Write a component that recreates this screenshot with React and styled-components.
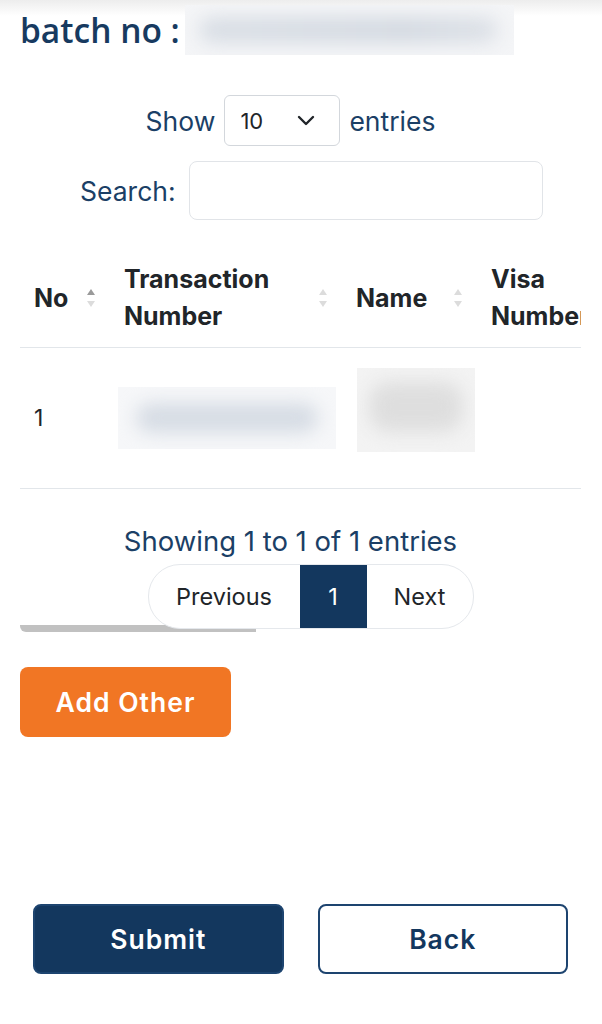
import React from 'react';
import styled, {createGlobalStyle} from 'styled-components';

const GlobalStyle = createGlobalStyle`
  body {
    margin: 0;
    background: #ffffff;
    font-family: Inter, "Liberation Sans", sans-serif;
  }
  * {
    box-sizing: border-box;
  }
`;

const Page = styled.div`
  width: 602px;
  height: 1024px;
  padding: 5px 21px 0 20px;
  background: linear-gradient(#ededed 0px, #ffffff 16px);
  display: flex;
  flex-direction: column;
`;

const BatchRow = styled.div`
  display: flex;
  align-items: center;
  height: 50px;
`;

const BatchLabel = styled.div`
  font-family: "Open Sans", "Liberation Sans", sans-serif;
  font-size: 33.5px;
  font-weight: 600;
  color: #173a60;
  margin-right: 5px;
`;

const Blurred = styled.div`
  width: ${p => p.w}px;
  height: ${p => p.h}px;
  background: ${p => p.bg};
  position: relative;
  overflow: hidden;

  &::after {
    content: '';
    position: absolute;
    inset: ${p => p.inset || '14px 18px'};
    background: ${p => p.blob};
    border-radius: 20px;
    filter: blur(9px);
  }
`;

const LengthRow = styled.div`
  margin-top: 40px;
  display: flex;
  justify-content: center;
  align-items: center;
  gap: 9px;
  padding-right: 20px;
`;

const Label = styled.span`
  font-size: 26.5px;
  color: #1b3f66;
`;

const SelectBox = styled.div`
  width: 116px;
  height: 51px;
  border: 1.5px solid #d3d7dc;
  border-radius: 6px;
  display: flex;
  align-items: center;
  justify-content: space-between;
  padding: 0 24px 0 15px;
  font-size: 22px;
  color: #212529;
`;

const SearchRow = styled.div`
  margin-top: 15px;
  display: flex;
  align-items: center;
  gap: 13px;
  padding-left: 60px;
`;

const SearchInput = styled.div`
  width: 354px;
  height: 59px;
  border: 1.5px solid #e1e4e8;
  border-radius: 8px;
`;

const TableWrap = styled.div`
  margin-top: 29px;
  width: 561px;
  overflow: hidden;
`;

const Table = styled.table`
  border-collapse: collapse;
  table-layout: fixed;
  width: 720px;
`;

const Th = styled.th`
  width: ${p => p.w}px;
  height: 97px;
  padding: 12px 14px;
  text-align: left;
  font-size: 25px;
  font-weight: 700;
  line-height: 37px;
  color: #212529;
  border-bottom: 1.5px solid #e2e6ea;
`;

const ThInner = styled.div`
  display: flex;
  align-items: center;
  justify-content: space-between;
  white-space: nowrap;
`;

const Td = styled.td`
  height: 141px;
  padding: 0 14px;
  font-size: 23px;
  color: #212529;
  vertical-align: middle;
  border-bottom: 1.5px solid #e2e6ea;
`;

const Info = styled.div`
  margin-top: 35px;
  text-align: center;
  font-size: 27.5px;
  color: #1b3f66;
  padding-right: 20px;
`;

const Pager = styled.div`
  margin: 6px auto 0;
  position: relative;
  left: 10px;
  display: flex;
  height: 65px;
  border: 1.5px solid #e5e8ec;
  border-radius: 32px;
  overflow: hidden;
  background: #fff;
  z-index: 1;
`;

const PageButton = styled.div`
  width: ${p => p.w}px;
  display: flex;
  align-items: center;
  justify-content: center;
  font-size: 23.5px;
  color: ${p => (p.active ? '#ffffff' : '#212529')};
  background: ${p => (p.active ? '#13375e' : 'transparent')};
`;

const ScrollThumb = styled.div`
  margin-top: -4px;
  width: 236px;
  height: 7px;
  background: #c1c1c1;
  border-radius: 0 0 0 6px;
`;

const AddButton = styled.button`
  margin-top: 35px;
  width: 211px;
  height: 70px;
  border: none;
  border-radius: 8px;
  background: #f17624;
  color: #fff;
  font-family: Inter, "Liberation Sans", sans-serif;
  font-size: 26.5px;
  font-weight: 600;
  letter-spacing: 1px;
`;

const ActionRow = styled.div`
  margin-top: 167px;
  padding: 0 13px;
  display: flex;
  gap: 34px;
`;

const ActionButton = styled.button`
  width: 251px;
  height: 70px;
  border-radius: 8px;
  border: 2px solid #1d446f;
  background: ${p => (p.outline ? '#ffffff' : '#13375e')};
  color: ${p => (p.outline ? '#13375e' : '#ffffff')};
  font-family: Inter, "Liberation Sans", sans-serif;
  font-size: 26.5px;
  font-weight: 600;
  letter-spacing: 1px;
`;

const SortIcon = ({active}) => (
    <svg width="10" height="22" viewBox="0 0 10 22">
        <path d="M5 2 L9 8 L1 8 Z" fill={active ? '#9a9a9a' : '#dcdcdc'}/>
        <path d="M5 20 L9 14 L1 14 Z" fill="#dcdcdc"/>
    </svg>
);

const Chevron = () => (
    <svg width="18" height="12" viewBox="0 0 18 12">
        <path d="M2 2 L9 9 L16 2" fill="none" stroke="#212529" strokeWidth="2.4" strokeLinecap="round" strokeLinejoin="round"/>
    </svg>
);

const columns = [
    {title: 'No', w: 90, sort: true, active: true},
    {title: <>Transaction<br/>Number</>, w: 232, sort: true},
    {title: 'Name', w: 135, sort: true},
    {title: <>Visa<br/>Number</>, w: 140},
    {title: 'Action', w: 125},
];

const App = () => {
    return (
        <Page>
            <GlobalStyle/>
            <BatchRow>
                <BatchLabel>batch no :</BatchLabel>
                <Blurred w={329} h={50} bg="#f4f5f7" blob="linear-gradient(90deg, #d9dee5, #d3d9e1 70%, #dde1e7)" inset="12px 16px 12px 14px"/>
            </BatchRow>

            <LengthRow>
                <Label>Show</Label>
                <SelectBox>10 <Chevron/></SelectBox>
                <Label>entries</Label>
            </LengthRow>

            <SearchRow>
                <Label>Search:</Label>
                <SearchInput/>
            </SearchRow>

            <TableWrap>
                <Table>
                    <thead>
                    <tr>
                        {columns.map((col, i) => (
                            <Th w={col.w} key={i}>
                                <ThInner>
                                    <span>{col.title}</span>
                                    {col.sort && <SortIcon active={col.active}/>}
                                </ThInner>
                            </Th>
                        ))}
                    </tr>
                    </thead>
                    <tbody>
                    <tr>
                        <Td>1</Td>
                        <Td style={{paddingLeft: 8}}>
                            <Blurred w={218} h={62} bg="#f6f7f9" blob="#d6dce4" inset="16px 18px"/>
                        </Td>
                        <Td style={{paddingLeft: 15}}>
                            <div style={{marginBottom: 16}}>
                                <Blurred w={118} h={84} bg="#f3f3f3" blob="#dedede" inset="14px 12px 20px 12px"/>
                            </div>
                        </Td>
                        <Td/>
                        <Td/>
                    </tr>
                    </tbody>
                </Table>
            </TableWrap>

            <Info>Showing 1 to 1 of 1 entries</Info>
            <Pager>
                <PageButton w={151}>Previous</PageButton>
                <PageButton w={67} active>1</PageButton>
                <PageButton w={106}>Next</PageButton>
            </Pager>
            <ScrollThumb/>

            <AddButton>Add Other</AddButton>

            <ActionRow>
                <ActionButton>Submit</ActionButton>
                <ActionButton outline>Back</ActionButton>
            </ActionRow>
        </Page>
    );
};

export default App;
